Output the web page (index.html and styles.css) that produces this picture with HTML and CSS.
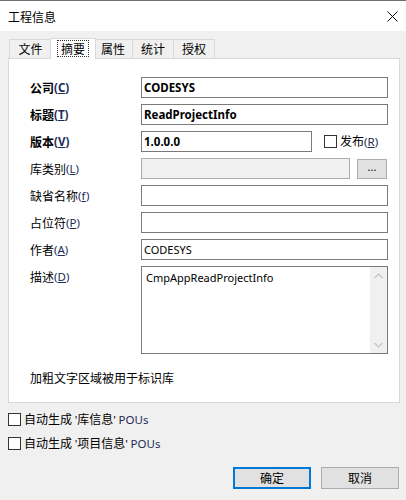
FILE: index.html
```html
<!DOCTYPE html>
<html lang="zh-CN">
<head>
<meta charset="utf-8">
<title>工程信息</title>
<link rel="stylesheet" href="styles.css">
</head>
<body>
<div class="window">
  <div class="titlebar">
    <span class="title">工程信息</span>
    <svg class="close" width="11" height="11" viewBox="0 0 11 11"><path d="M0.5 0.5 L10.5 10.5 M10.5 0.5 L0.5 10.5" stroke="#111" stroke-width="1" fill="none"/></svg>
  </div>
  <div class="content">
    <div class="tabs">
      <div class="tab t1">文件</div>
      <div class="tab active"><span class="focus">摘要</span></div>
      <div class="tab t3">属性</div>
      <div class="tab t4">统计</div>
      <div class="tab t5">授权</div>
    </div>
    <div class="panel">
      <div class="form">
        <div class="lbl bold">公司<span class="acc">(<u>C</u>)</span></div>
        <div class="field bold">CODESYS</div>

        <div class="lbl bold">标题<span class="acc">(<u>T</u>)</span></div>
        <div class="field bold">ReadProjectInfo</div>

        <div class="lbl bold">版本<span class="acc">(<u>V</u>)</span></div>
        <div class="row">
          <div class="field bold short">1.0.0.0</div>
          <div class="check release"><span class="box"></span><span>发布<span class="acc">(<u>R</u>)</span></span></div>
        </div>

        <div class="lbl">库类别<span class="acc">(<u>L</u>)</span></div>
        <div class="row">
          <div class="field disabled lib"></div>
          <div class="btn dots">...</div>
        </div>

        <div class="lbl">缺省名称<span class="acc">(<u>f</u>)</span></div>
        <div class="field"></div>

        <div class="lbl">占位符<span class="acc">(<u>P</u>)</span></div>
        <div class="field"></div>

        <div class="lbl">作者<span class="acc">(<u>A</u>)</span></div>
        <div class="field">CODESYS</div>

        <div class="lbl">描述<span class="acc">(<u>D</u>)</span></div>
        <div class="field area">
          <div class="area-text">CmpAppReadProjectInfo</div>
          <div class="scroll">
            <svg width="9" height="6" viewBox="0 0 9 6"><path d="M0.5 5 L4.5 1 L8.5 5" stroke="#c4c4c4" stroke-width="1.2" fill="none"/></svg>
            <svg width="9" height="6" viewBox="0 0 9 6"><path d="M0.5 1 L4.5 5 L8.5 1" stroke="#c4c4c4" stroke-width="1.2" fill="none"/></svg>
          </div>
        </div>
      </div>
      <p class="note">加粗文字区域被用于标识库</p>
    </div>
    <div class="checks">
      <div class="check"><span class="box"></span><span>自动生成 <span class="lat">'</span>库信息<span class="lat">'</span> <span class="acc">POUs</span></span></div>
      <div class="check"><span class="box"></span><span>自动生成 <span class="lat">'</span>项目信息<span class="lat">'</span> <span class="acc">POUs</span></span></div>
    </div>
    <div class="buttons">
      <div class="btn primary">确定</div>
      <div class="btn">取消</div>
    </div>
  </div>
</div>
</body>
</html>
```
FILE: styles.css
```css
html, body {
  margin: 0;
  padding: 0;
  background: #f0f0f0;
}
body {
  font-family: "Noto Sans", "Noto Sans CJK SC", sans-serif;
  font-size: 11px;
  line-height: 16px;
  color: #000;
}
.window {
  width: 406px;
  height: 500px;
  position: relative;
}
.titlebar {
  height: 30px;
  border-top: 1px solid #6e6e6e;
  background: #fff;
  display: flex;
  align-items: center;
  justify-content: space-between;
  padding: 0 7px 0 8px;
}
.title {
  font-family: "Noto Sans CJK SC", sans-serif;
  font-size: 12px;
  margin-top: 1px;
}
.close {
  display: block;
  margin-right: 1px;
}
.content {
  padding: 7px 6px 0 8px;
}
.tabs {
  display: flex;
  align-items: flex-end;
  height: 20px;
  padding-left: 1px;
  position: relative;
  z-index: 1;
}
.tab {
  border: 1px solid #d9d9d9;
  border-bottom: none;
  background: #f0f0f0;
  display: flex;
  align-items: center;
  justify-content: center;
  font-family: "Noto Sans CJK SC", sans-serif;
  font-size: 12px;
  box-sizing: border-box;
  height: 19px;
  margin-left: -1px;
}
.t1 { width: 43px; margin-left: 0; }
.t3 { width: 40px; }
.t4 { width: 42px; }
.t5 { width: 42px; }
.tab.active {
  width: 46px;
  height: 21px;
  background: #fff;
  margin-bottom: -1px;
  margin-left: -2px;
  margin-right: -2px;
  position: relative;
  z-index: 2;
  align-items: flex-start;
  padding-top: 1px;
}
.focus {
  border: 1px dotted #333;
  padding: 0 3px;
  line-height: 15px;
}
.panel {
  width: 392px;
  height: 345px;
  box-sizing: border-box;
  background: #fff;
  border: 1px solid #d9d9d9;
  padding: 18px 0 0 21px;
}
.form {
  display: grid;
  grid-template-columns: 111px 247px;
  grid-auto-rows: auto;
  row-gap: 6px;
  align-items: start;
}
.lbl {
  font-family: "Noto Sans CJK SC", sans-serif;
  font-size: 12px;
  display: flex;
  align-items: center;
  white-space: nowrap;
  height: 21px;
}
.acc, .lat {
  font-family: "Noto Sans", sans-serif;
  font-size: 11.5px;
}
.acc {
  color: #1e2b55;
}
.acc u {
  text-decoration-thickness: 1px;
  text-underline-offset: 1px;
}
.bold { font-weight: bold; }
.field {
  border: 1px solid #7a7a7a;
  background: #fff;
  box-sizing: border-box;
  height: 21px;
  padding: 0 2px;
  display: flex;
  align-items: center;
  white-space: nowrap;
}
.field.bold { font-size: 11.5px; }
.row {
  display: flex;
  align-items: center;
  height: 21px;
}
.field.short { width: 171px; }
.check {
  display: flex;
  align-items: center;
  gap: 3px;
  font-family: "Noto Sans CJK SC", sans-serif;
  font-size: 12px;
  white-space: nowrap;
}
.release { margin-left: 12px; }
.box {
  width: 13px;
  height: 13px;
  box-sizing: border-box;
  border: 1px solid #333;
  background: #fff;
  flex: none;
}
.field.disabled {
  background: #f0f0f0;
  border-color: #adadad;
}
.field.lib { width: 209px; }
.btn {
  box-sizing: border-box;
  border: 1px solid #adadad;
  background: #e1e1e1;
  display: flex;
  align-items: center;
  justify-content: center;
  font-family: "Noto Sans CJK SC", sans-serif;
  font-size: 12px;
}
.btn.dots {
  width: 30px;
  height: 20px;
  margin-left: 7px;
  font-family: "Noto Sans", sans-serif;
  font-size: 11px;
  padding-bottom: 3px;
}
.field.area {
  height: 88px;
  padding: 0;
  align-items: stretch;
  justify-content: space-between;
}
.area-text {
  padding: 3px 0 0 4px;
}
.scroll {
  width: 17px;
  background: #f0f0f0;
  display: flex;
  flex-direction: column;
  align-items: center;
  justify-content: space-between;
  padding: 6px 0 5px;
  box-sizing: border-box;
}
.scroll svg { display: block; }
.note {
  margin: 16px 0 0;
  font-family: "Noto Sans CJK SC", sans-serif;
  font-size: 12px;
}
.checks {
  padding-top: 10px;
  display: flex;
  flex-direction: column;
  gap: 11px;
}
.checks .check { height: 13px; gap: 3px; }
.buttons {
  display: flex;
  justify-content: flex-end;
  gap: 10px;
  margin-top: 17px;
  padding-right: 1px;
}
.buttons .btn {
  width: 78px;
  height: 22px;
}
.buttons .btn.primary {
  border: 2px solid #0078d7;
}
```
